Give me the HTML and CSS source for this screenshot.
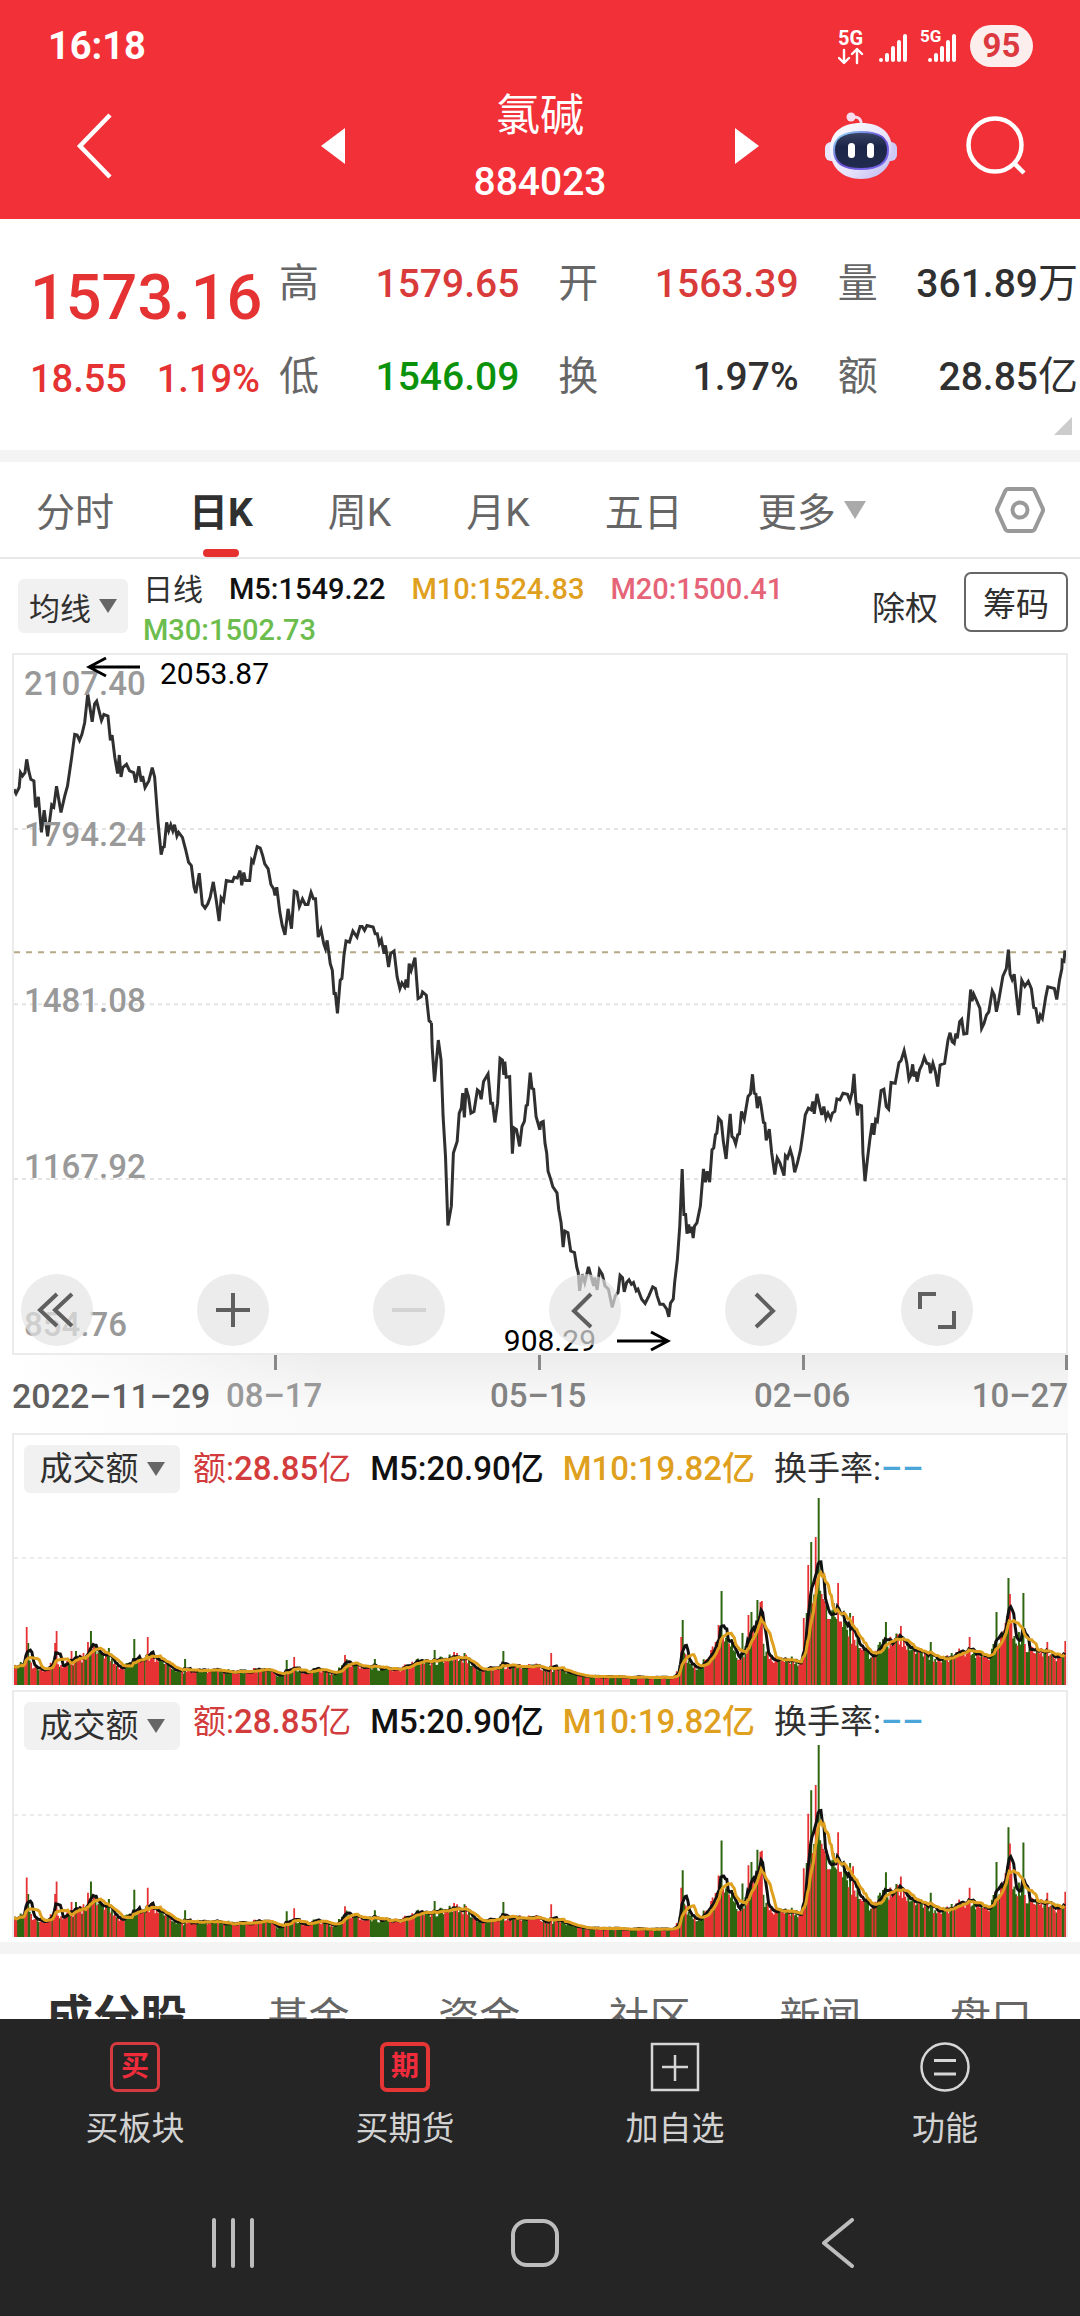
FILE: index.html
```
<!DOCTYPE html>
<html lang="zh-CN">
  <head>
    <meta charset="utf-8">
    <meta name="viewport" content="width=device-width, initial-scale=1">
    <title>氯碱 884023</title>
    <link rel="stylesheet" href="styles.css">
  </head>
  <body>
    <header>
      <div class="status">
        <span class="time">16:18</span>
        <div class="status-icons">
          <svg width="120" height="42" viewBox="0 0 120 42" aria-hidden="true">
            <g fill="#fff" font-family="Roboto, sans-serif" font-weight="700">
              <text x="0" y="20" font-size="20">5G</text>
              <text x="82" y="17" font-size="17">5G</text>
            </g>
            <g fill="none" stroke="#fff" stroke-width="2.4" stroke-linecap="round" stroke-linejoin="round">
              <path d="M6 25v12M1 33l5 5 5-5M19 38V25M14 29l5-5 5 5"/>
            </g>
            <g fill="none" stroke="#fff" stroke-width="4" stroke-linecap="round">
              <path d="M43 35v0M49 30v5M55 23v12M61 17v18M67 11v24M92 35v0M98 30v5M104 23v12M110 17v18M116 11v24"/>
            </g>
          </svg>
          <span class="battery">95</span>
        </div>
      </div>
      <nav class="title-bar">
        <a href="#" class="back" aria-label="返回">
          <svg width="40" height="70" viewBox="0 0 40 70"><path d="M38 4L8 35l30 31" fill="none" stroke="#fff" stroke-width="4.5"/></svg>
        </a>
        <a href="#" aria-label="上一个">
          <svg width="24" height="36" viewBox="0 0 24 36"><path d="M24 0v36L0 18z" fill="#fff"/></svg>
        </a>
        <div class="title">
          <h1>氯碱</h1>
          <span>884023</span>
        </div>
        <a href="#" aria-label="下一个">
          <svg width="24" height="36" viewBox="0 0 24 36"><path d="M0 0v36l24-18z" fill="#fff"/></svg>
        </a>
        <a href="#" class="robot" aria-label="智能助手">
          <svg width="72" height="68" viewBox="0 0 72 68">
            <defs>
              <linearGradient id="shell" x1="0" y1="0" x2="1" y2="1">
                <stop offset="0" stop-color="#fff"/>
                <stop offset=".6" stop-color="#e6e2fb"/>
                <stop offset="1" stop-color="#b9b4ee"/>
              </linearGradient>
              <linearGradient id="rim" x1="0" y1="0" x2="1" y2="1">
                <stop offset="0" stop-color="#8fe3f5"/>
                <stop offset=".5" stop-color="#6a4fd6"/>
                <stop offset="1" stop-color="#7a6cf0"/>
              </linearGradient>
              <linearGradient id="face" x1="0" y1="0" x2="0" y2="1">
                <stop offset="0" stop-color="#3a4566"/>
                <stop offset=".4" stop-color="#1b2547"/>
                <stop offset="1" stop-color="#222c50"/>
              </linearGradient>
            </defs>
            <path d="M27 5q10-1 9 8" fill="none" stroke="#f3dcf0" stroke-width="3"/>
            <circle cx="26" cy="5" r="4.5" fill="#f6dcee"/>
            <rect x="0" y="30" width="14" height="19" rx="6" fill="#e9e6fb"/>
            <rect x="58" y="30" width="14" height="19" rx="6" fill="#cfcaf5"/>
            <path d="M36 11c20 0 31 10 31 26 0 18-12 30-31 30S5 55 5 37c0-16 11-26 31-26z" fill="url(#shell)"/>
            <path d="M36 20c19 0 27 6 27 18s-8 19-27 19S9 50 9 38s8-18 27-18z" fill="url(#face)" stroke="url(#rim)" stroke-width="2"/>
            <rect x="23" y="31" width="7" height="15" rx="3.5" fill="#fff"/>
            <rect x="42" y="31" width="7" height="15" rx="3.5" fill="#fff"/>
          </svg>
        </a>
        <a href="#" class="search" aria-label="搜索">
          <svg width="62" height="62" viewBox="0 0 62 62"><g fill="none" stroke="#fff" stroke-width="4.5"><circle cx="29" cy="30" r="26.5"/><path d="M48 48l10 10"/></g></svg>
        </a>
      </nav>
    </header>

    <main>
      <section class="quote">
        <div class="price">
          <strong>1573.16</strong>
          <div class="change"><span>18.55</span><span>1.19%</span></div>
        </div>
        <dl>
          <div><dt>高</dt><dd class="up">1579.65</dd></div>
          <div><dt>开</dt><dd class="up">1563.39</dd></div>
          <div><dt>量</dt><dd>361.89<i>万</i></dd></div>
          <div><dt>低</dt><dd class="down">1546.09</dd></div>
          <div><dt>换</dt><dd>1.97%</dd></div>
          <div><dt>额</dt><dd>28.85<i>亿</i></dd></div>
        </dl>
        <span class="corner"></span>
      </section>

      <nav class="periods">
        <a href="#">分时</a>
        <a href="#" class="active">日K</a>
        <a href="#">周K</a>
        <a href="#">月K</a>
        <a href="#">五日</a>
        <a href="#" class="more">更多<span class="caret"></span></a>
        <button type="button" class="settings" aria-label="设置">
          <svg width="50" height="48" viewBox="0 0 50 48"><g fill="none" stroke="#999" stroke-width="4"><path d="M13 3h24q1.500 0 2.500 1.500L47.500 22q1 2 0 4L39.500 43.500Q38.500 45 37 45H13q-1.500 0-2.500-1.500L2.500 26q-1-2 0-4L10.500 4.500Q11.500 3 13 3z"/><circle cx="25" cy="24" r="7.500"/></g></svg>
        </button>
      </nav>

      <section class="averages">
        <button type="button" class="pick">均线<span class="caret"></span></button>
        <p>
          <span>日线</span>
          <span class="m5">M5:1549.22</span>
          <span class="m10">M10:1524.83</span>
          <span class="m20">M20:1500.41</span>
          <span class="m30">M30:1502.73</span>
        </p>
        <a href="#" class="rights">除权</a>
        <button type="button" class="chips">筹码</button>
      </section>

      <section class="kline">
        <svg class="line" viewBox="35 11 3067 2101" preserveAspectRatio="none" aria-hidden="true">
          <g fill="none" stroke="#e3e3e3" stroke-width="2" stroke-dasharray="4 4">
            <path d="M35 535H3102M35 1062H3102M35 1588H3102"/>
          </g>
          <path d="M35 906H3102" fill="none" stroke="#b5a985" stroke-width="2" stroke-dasharray="6 6"/>
          <g fill="none" stroke="#303030" stroke-width="3">
            <path d="M35 415L41 428 50 410 54 365 60 375 67 365 72 325 78 360 84 385 93 390 98 470 106 438 115 545 123 478 133 557 145 462 151 468 159 406 172 485 183 435 191 405 203 320 212 250 219 252 226 268 233 250 241 215 250 128 263 212 270 158 276 150 290 208 297 190 309 195 316 268 321 252 329 320 337 368 342 312 347 378 352 350 363 340 372 360 384 365 390 395 399 346 406 392 410 375 417 410 428 390 438 350 445 378 455 515 464 612 469 590 473 588 480 515 486 540 492 522 498 540 503 522 510 556 515 545 526 560 535 595 544 635 552 645 560 710 565 728 575 668 584 762 592 773 600 760 607 740 616 694 624 745 633 812 639 742 646 752 654 690 665 692 672 693 677 680 686 682 694 660 699 704 705 666 710 690 722 690 728 628 733 635 744 588 753 592 760 615 766 640 776 655 784 702 792 715 796 735 801 710 810 785 817 825 825 853 834 775 844 835 852 722 860 725 867 768 876 745 884 762 892 762 901 726 908 745 914 745 922 860 930 838 938 880 943 895 948 870 957 940 963 960 968 1030 972 1030 978 1090 986 990 991 985 997 915 1003 872 1013 875 1023 842 1035 860 1044 828 1050 828 1057 840 1064 825 1082 830 1088 850 1094 850 1100 880 1106 868 1114 910 1118 885 1127 950 1133 910 1143 902 1152 980 1160 1015 1166 998 1174 1010 1178 988 1183 1012 1187 940 1193 960 1204 922 1213 1045 1222 1040 1226 1025 1237 1035 1245 1112 1252 1118"/>
            <path transform="translate(0 900)" d="M1252 218L1254 290 1261 395 1272 270 1280 330 1286 500 1293 620 1300 828 1310 770 1316 610 1327 575 1333 490 1339 475 1343 430 1348 503 1353 415 1360 440 1367 490 1376 485 1386 420 1392 425 1397 448 1404 395 1417 372 1425 460 1430 460 1437 518 1445 460 1452 325 1459 330 1463 375 1466 335 1470 382 1480 380 1488 612 1493 535 1500 540 1509 590 1516 530 1523 515 1528 468 1532 465 1540 368 1545 415 1550 418 1557 500 1568 540"/>
            <path transform="translate(1568 750)" d="M0 690L3 668 10 665 15 730 20 760 24 815 32 840 38 862 50 880 55 930 62 970 68 1043 73 995 82 1000 90 1055 101 1060 108 1105 112 1120 116 1175 124 1125 131 1150 142 1103 149 1130 157 1160 160 1135 167 1172 174 1112 182 1125 190 1160 200 1170 211 1225 220 1190 228 1180 234 1128 241 1135 246 1178 253 1150 260 1142 267 1155 273 1150 281 1175 286 1170 297 1200 307 1213 318 1190 329 1163 337 1168 342 1190 350 1215 360 1215 370 1230 376 1253 381 1212 389 1200 393 1150 401 1080 408 980 415 808 420 945 425 945 429 1003 434 975 438 1000 443 982 447 1016 451 980 458 970 468 920 477 808 483 848 488 815 495 848 502 750 507 745 512 705 516 700 521 655 529 665 535 725 543 778 548 720 555 642 560 710 565 715 571 733 577 705 582 702 588 635 596 658 607 590 614 582 620 523 625 580 630 583 634 625 640 590 645 618 652 668 656 670 660 722 669 688 676 760 685 825 692 775 700 790 712 828 716 768 722 775 730 750 737 775 743 818 751 790 760 750 767 700 774 645 783 625 791 630 796 605 800 642 808 582 815 615 822 645 828 620 834 655 840 640 848 657 853 640 860 635 866 597 875 600 884 580 897 583 904 603 911 575 916 522 921 600 926 647 930 615 938 618 942 760 948 845 955 780 962 720 969 670 974 705 979 660 984 665 995 572 1003 568 1010 620 1017 628 1024 548 1036 550 1047 488 1053 482 1062 452 1070 490 1076 538 1082 525 1087 493 1091 530 1096 515 1100 545 1107 510 1114 495 1121 472 1128 490 1135 492 1139 520 1146 490 1153 515 1160 560 1167 495 1180 490 1190 420 1196 398 1202 425 1208 430 1213 400 1217 415 1224 365 1230 358 1236 402 1245 400 1252 320 1256 268 1260 303 1265 282 1272 298 1283 325 1288 385 1295 370 1302 345 1309 335 1319 272 1325 285 1331 335 1338 300 1350 228 1360 205 1366 148 1371 222 1377 238 1383 222 1390 290 1396 345 1405 240 1414 258 1424 243 1433 265 1440 322 1446 325 1453 370 1459 345 1465 355 1475 290 1481 260 1500 265 1507 298 1515 240 1522 205 1523 180 1528 183 1531 150"/>
          </g>
        </svg>
        <span class="scale s1">2107.40</span>
        <span class="scale s2">1794.24</span>
        <span class="scale s3">1481.08</span>
        <span class="scale s4">1167.92</span>
        <span class="scale s5">854.76</span>
        <span class="mark high"><svg width="54" height="22" viewBox="0 0 54 22"><path d="M54 11H3M20 2L3 11l17 9" fill="none" stroke="#000" stroke-width="3"/></svg>2053.87</span>
        <span class="mark low">908.29<svg width="54" height="22" viewBox="0 0 54 22"><path d="M0 11h51M34 2l17 9-17 9" fill="none" stroke="#000" stroke-width="3"/></svg></span>
        <div class="tools">
          <button type="button" aria-label="最早"><svg viewBox="0 0 72 72"><path d="M36 20L19 36l17 16M51 20L34 36l17 16"/></svg></button>
          <button type="button" aria-label="放大"><svg viewBox="0 0 72 72"><path d="M36 19v34M19 36h34"/></svg></button>
          <button type="button" aria-label="缩小" disabled><svg viewBox="0 0 72 72"><path d="M19 36h34"/></svg></button>
          <button type="button" aria-label="左移"><svg viewBox="0 0 72 72"><path d="M42 20L25 37l17 16"/></svg></button>
          <button type="button" aria-label="右移"><svg viewBox="0 0 72 72"><path d="M31 20l17 17-17 16"/></svg></button>
          <button type="button" aria-label="全屏"><svg viewBox="0 0 72 72"><path d="M19 35V20h16M53 37v16H37"/></svg></button>
        </div>
      </section>

      <div class="dates">
        <span class="first">2022–11–29</span>
        <span class="faded">08–17</span>
        <span>05–15</span>
        <span>02–06</span>
        <span class="last">10–27</span>
      </div>

      <section class="volume">
        <div class="legend">
          <button type="button" class="pick">成交额<span class="caret"></span></button>
          <span class="amount">额:<b>28.85</b>亿</span>
          <span class="m5">M5:20.90亿</span>
          <span class="m10">M10:19.82亿</span>
          <span>换手率:<em>––</em></span>
        </div>
        <svg class="bars" viewBox="0 0 1056 187" preserveAspectRatio="none" aria-hidden="true"></svg>
      </section>

      <section class="volume second">
        <div class="legend">
          <button type="button" class="pick">成交额<span class="caret"></span></button>
          <span class="amount">额:<b>28.85</b>亿</span>
          <span class="m5">M5:20.90亿</span>
          <span class="m10">M10:19.82亿</span>
          <span>换手率:<em>––</em></span>
        </div>
        <svg class="bars" viewBox="0 0 1056 187" preserveAspectRatio="none" aria-hidden="true"></svg>
      </section>

      <nav class="sections">
        <a href="#" class="active">成分股</a>
        <a href="#">基金</a>
        <a href="#">资金</a>
        <a href="#">社区</a>
        <a href="#">新闻</a>
        <a href="#">盘口</a>
      </nav>
    </main>

    <footer>
      <nav class="actions">
        <a href="#"><span class="stamp">买</span>买板块</a>
        <a href="#"><span class="stamp bold">期</span>买期货</a>
        <a href="#">
          <svg width="50" height="50" viewBox="0 0 50 50"><path d="M2 2h46v46H2zM25 13v26M12 25h26" fill="none" stroke="#d6d6d6" stroke-width="2.500"/></svg>加自选
        </a>
        <a href="#">
          <svg width="50" height="50" viewBox="0 0 50 50"><g fill="none" stroke="#d6d6d6" stroke-width="2.500"><circle cx="25" cy="25" r="23.500"/><path d="M14 18.500h22M14 32h22" stroke-width="3"/></g></svg>功能
        </a>
      </nav>
      <div class="system">
        <button type="button" aria-label="最近任务"><svg width="50" height="50" viewBox="0 0 50 50"><path d="M6 2v46M25 2v46M44 2v46"/></svg></button>
        <button type="button" aria-label="主屏幕"><svg width="50" height="50" viewBox="0 0 50 50"><rect x="3" y="3" width="44" height="44" rx="14"/></svg></button>
        <button type="button" aria-label="返回"><svg width="50" height="50" viewBox="0 0 50 50"><path d="M40 2L12 25l28 23"/></svg></button>
      </div>
    </footer>
    <script src="chart.js"></script>
  </body>
</html>
```
FILE: styles.css
```
* {
    box-sizing: border-box;
}

body, html {
    height: 100%;
    margin: 0;
}

body {
    display: flex;
    flex-direction: column;
    background: #fff;
    color: #303030;
    font-family: Roboto, 'Noto Sans CJK SC', sans-serif;
    font-size: 32px;
}

a {
    color: inherit;
    text-decoration: none;
}

button {
    border: 0;
    padding: 0;
    background: none;
    color: inherit;
    font: inherit;
}

svg {
    display: block;
}

h1, p, dl, dd {
    margin: 0;
}

header {
    flex: none;
    background: #f13038;
    color: #fff;
}

.status {
    display: flex;
    justify-content: space-between;
    align-items: center;
    height: 92px;
    padding: 0 47px 0 48px;
}

.time {
    font-size: 38px;
    font-weight: 700;
}

.status-icons {
    display: flex;
    align-items: center;
    gap: 12px;
}

.battery {
    width: 63px;
    border-radius: 21px;
    background: #fdeeee;
    color: #dc3a40;
    font-size: 33px;
    font-weight: 700;
    line-height: 42px;
    text-align: center;
}

.title-bar {
    display: grid;
    grid-template-columns: 321px 24px 1fr 24px 66px 72px 183px;
    grid-template-rows: 108px;
    align-items: center;
    height: 127px;
}

.back {
    padding-left: 72px;
}

.title {
    padding-top: 6px;
    font-size: 39px;
    font-weight: 500;
    line-height: 66px;
    text-align: center;
}

.title h1 {
    font-size: 44px;
    font-weight: 400;
    line-height: 66px;
}

.title span {
    display: block;
}

.robot {
    grid-column: 6;
}

.search {
    padding-left: 69px;
}

.quote {
    position: relative;
    display: grid;
    grid-template-columns: 249px 1fr;
    height: 231px;
    padding: 18px 2px 0 30px;
}

.price {
    color: #e53232;
    font-weight: 500;
}

.price strong {
    display: block;
    font-size: 63px;
    font-weight: 500;
    line-height: 122px;
}

.change {
    display: flex;
    justify-content: space-between;
    padding-right: 19px;
    font-size: 38px;
    line-height: 40px;
}

.quote dl {
    display: grid;
    grid-template-columns: repeat(3, 1fr);
    grid-auto-rows: 93px;
    column-gap: 39px;
}

.quote dl div {
    display: flex;
    justify-content: space-between;
    align-items: baseline;
    line-height: 93px;
    white-space: nowrap;
}

.quote dt {
    color: #666;
    font-size: 40px;
}

.quote dd {
    font-size: 39px;
    font-weight: 500;
}

.quote dd i {
    font-size: 40px;
    font-style: normal;
    font-weight: 400;
    line-height: 40px;
}

.quote .up {
    color: #d93a3a;
}

.quote .down {
    color: #0a930a;
}

.corner {
    position: absolute;
    right: 8px;
    bottom: 15px;
    border-bottom: 18px solid #ccc;
    border-left: 18px solid transparent;
}

.periods {
    display: flex;
    align-items: center;
    gap: 75px;
    height: 109px;
    padding: 0 35px 0 36px;
    border-top: 12px solid #f4f4f4;
    border-bottom: 2px solid #e8e8e8;
    color: #666;
    font-size: 39px;
}

.periods a {
    padding-top: 8px;
    line-height: 87px;
}

.periods .active {
    position: relative;
    color: #303030;
    font-weight: 700;
}

.periods .active::after {
    content: "";
    position: absolute;
    left: 50%;
    bottom: 0;
    width: 36px;
    height: 8px;
    margin-left: -18px;
    border-radius: 4px;
    background: #e63030;
}

.caret {
    display: inline-block;
    border: 9px solid transparent;
    border-top: 14px solid #666;
    border-bottom: 0;
}

.more {
    display: flex;
    align-items: center;
    gap: 8px;
}

.more .caret {
    margin-bottom: 8px;
    border-width: 18px 11px 0;
    border-top-color: #aaa;
}

.settings {
    margin-left: auto;
}

.averages {
    display: flex;
    align-items: center;
    height: 94px;
    padding: 0 12px 0 18px;
}

.pick {
    display: flex;
    align-items: center;
    justify-content: center;
    gap: 8px;
    width: 110px;
    height: 54px;
    border-radius: 6px;
    background: #f1f1f1;
    font-size: 31px;
}

.averages p {
    display: flex;
    flex: 1;
    flex-wrap: wrap;
    column-gap: 26px;
    padding: 8px 0 0 15px;
    font-size: 29px;
    font-weight: 500;
    line-height: 41px;
}

.averages p span:first-child {
    font-size: 30px;
    font-weight: 400;
}

.m5 {
    color: #111;
}

.m10 {
    color: #dfa020;
}

.m20 {
    color: #e56478;
}

.m30 {
    color: #6dbd4e;
}

.rights {
    padding-right: 26px;
    font-size: 33px;
}

.chips {
    width: 104px;
    height: 60px;
    margin-bottom: 8px;
    border: 2px solid #666;
    border-radius: 7px;
    font-size: 33px;
}

.kline {
    position: relative;
    margin: 0 12px;
    border: 2px solid #ebebeb;
}

.line {
    width: 100%;
    height: 698px;
}

.line path {
    vector-effect: non-scaling-stroke;
}

.scale {
    position: absolute;
    left: 10px;
    color: #999;
    font-size: 33px;
    font-weight: 500;
    line-height: 40px;
}

.s1 { top: 9px; }
.s2 { top: 160px; }
.s3 { top: 326px; }
.s4 { top: 492px; }
.s5 { top: 650px; }

.mark {
    position: absolute;
    display: flex;
    color: #000;
    font-size: 30px;
    line-height: 36px;
}

.high {
    top: 1px;
    left: 72px;
    gap: 20px;
}

.low {
    right: 395px;
    bottom: -6px;
    align-items: center;
    gap: 21px;
}

.tools {
    position: absolute;
    right: -2px;
    bottom: 7px;
    left: -2px;
    display: grid;
    grid-template-columns: repeat(6, 1fr);
}

.tools button {
    width: 72px;
    height: 72px;
    margin-left: 9px;
    border-radius: 50%;
    background: rgba(228, 228, 228, 0.7);
}

.tools path {
    fill: none;
    stroke: #5f5f5f;
    stroke-width: 4;
}

.tools button:disabled path {
    stroke: #d3d3d3;
}

.dates {
    display: grid;
    grid-template-columns: 214px repeat(3, 1fr) 50px;
    height: 78px;
    margin: 0 12px;
    background: linear-gradient(90deg, #fff, rgba(255, 255, 255, 0) 30%), linear-gradient(#ededed, #fafafa 70%);
    color: #828282;
    font-size: 33px;
    font-weight: 500;
    line-height: 82px;
    white-space: nowrap;
}

.dates span {
    position: relative;
}

.dates .first {
    color: #606060;
    font-size: 34px;
}

.dates .faded {
    color: #999;
}

/* tick marks hang from the chart frame */
.dates span:not(.first)::before {
    content: "";
    position: absolute;
    top: 0;
    left: 48px;
    width: 3px;
    height: 15px;
    background: #888;
}

.dates .last {
    justify-self: end;
}

.dates span.last::before {
    right: 0;
    left: auto;
}

.volume {
    margin: 0 12px;
    padding-top: 10px;
    border: 2px solid #ebebeb;
    border-bottom: 0;
    background: repeating-linear-gradient(90deg, #ececec 0 4px, #fff 4px 8px) 0 122px / 100% 2px no-repeat;
}

.second {
    margin-top: 5px;
    margin-bottom: 5px;
}

.legend {
    display: flex;
    gap: 19px;
    padding-left: 10px;
    font-size: 33px;
    line-height: 48px;
    white-space: nowrap;
}

.legend .pick {
    width: 156px;
    height: 48px;
    margin-right: -6px;
    font-size: 33px;
}

.second .legend {
    line-height: 40px;
}

.legend b, .legend .m5, .legend .m10 {
    font-weight: 500;
}

.legend em {
    color: #4aa5d8;
    font-style: normal;
    font-weight: 500;
}

.amount {
    color: #d23c3c;
}

.bars {
    width: 100%;
    height: 187px;
    margin-top: 5px;
}

.second .bars {
    height: 192px;
    margin-top: -5px;
}

.bars path {
    fill: none;
}

.sections {
    display: flex;
    justify-content: space-between;
    align-items: center;
    padding: 30px 48px 28px 46px;
    border-top: 12px solid #f4f4f4;
    color: #666;
    font-size: 41px;
    line-height: 68px;
}

.sections .active {
    margin-right: -8px;
    color: #303030;
    font-size: 47px;
    font-weight: 700;
}

main {
    flex: 1;
    min-height: 0;
    overflow: hidden;
}

footer {
    flex: none;
    height: 297px;
    background: #252525;
    color: #d2d2d2;
}

.actions {
    display: grid;
    grid-template-columns: repeat(4, 1fr);
    padding-top: 23px;
}

.actions a {
    display: flex;
    flex-direction: column;
    align-items: center;
    gap: 12px;
    font-size: 33px;
    line-height: 50px;
}

.stamp {
    width: 50px;
    height: 50px;
    border: 3px solid #d43a40;
    border-radius: 7px;
    color: #f02c3c;
    font-size: 28px;
    font-weight: 700;
    line-height: 43px;
    text-align: center;
}

.stamp.bold {
    border-width: 4px;
    border-color: #e63535;
    line-height: 41px;
}

.system {
    display: flex;
    justify-content: space-between;
    padding: 64px 218px 0 208px;
}

.system svg {
    fill: none;
    stroke: #bdbdbd;
    stroke-width: 4;
    stroke-linecap: round;
    stroke-linejoin: round;
}
```
FILE: chart.js
```
(function () {
    'use strict';

    var DAYS = 704,
        STEP = 1.5,
        HEIGHT = 187,
        // [x, height] of the usual turnover level along the chart
        level = [
            [0, 18], [12, 26], [19, 19], [29, 15], [40, 24], [50, 21], [60, 26], [71, 30], [78, 36], [86, 36], [95, 26], [105, 18],
            [115, 21], [126, 28], [139, 31], [150, 23], [160, 16], [170, 13], [181, 16], [229, 14], [250, 18], [263, 10],
            [274, 14], [284, 16], [291, 13], [301, 17], [312, 14], [322, 12], [332, 25], [346, 19], [387, 16], [401, 26],
            [415, 23], [439, 30], [453, 28], [467, 16], [487, 20], [498, 20], [525, 20], [528, 16], [539, 16], [546, 18], [560, 11],
            [573, 9], [622, 8], [660, 8], [666, 14], [672, 32], [678, 23], [684, 18], [697, 29], [708, 50], [715, 50], [721, 42],
            [728, 27], [735, 42], [749, 72], [753, 37], [758, 27], [766, 25], [780, 27], [789, 21], [794, 42], [797, 85], [808, 100], [814, 78],
            [828, 78], [838, 53], [849, 43], [859, 32], [883, 51], [897, 41], [918, 30], [932, 26], [952, 36], [962, 36],
            [976, 26], [983, 41], [997, 66], [1007, 50], [1021, 37], [1035, 33], [1042, 30], [1056, 28]
        ],
        // [x, height, closed higher]
        spikes = [
            [12, 58, 1], [14, 42, 0], [40, 42, 1], [42, 54, 1], [57, 34, 1], [62, 34, 0], [74, 43, 1], [77, 54, 0], [95, 37, 0],
            [120, 46, 0], [134, 48, 1], [171, 26, 0], [273, 25, 0], [281, 28, 1], [332, 30, 1], [362, 26, 0], [421, 35, 0],
            [441, 33, 1], [452, 32, 0], [490, 34, 0], [539, 32, 1], [669, 48, 1], [671, 65, 0], [707, 60, 1], [710, 94, 0],
            [731, 52, 0], [737, 70, 1], [739, 73, 0], [746, 85, 0], [748, 83, 1], [750, 84, 1], [792, 67, 1], [795, 72, 0],
            [797, 120, 1], [800, 143, 0], [804, 148, 1], [807, 187, 0], [812, 86, 1], [827, 102, 1], [839, 72, 0], [841, 69, 1],
            [874, 63, 0], [890, 59, 1], [920, 43, 0], [959, 48, 1], [985, 73, 0], [995, 62, 1], [997, 107, 0], [999, 91, 1],
            [1013, 92, 0], [1037, 43, 1], [1054, 44, 1]
        ],
        seed = 7;

    function random () {
        seed = (seed * 16807) % 2147483647;
        return seed / 2147483647;
    }

    function levelAt (x) {
        var i = 1;
        while (i < level.length - 1 && level[i][0] < x) {
            i = i + 1;
        }
        var a = level[i - 1], b = level[i];
        return a[1] + (b[1] - a[1]) * (x - a[0]) / (b[0] - a[0]);
    }

    function buildDays () {
        var days = [], up = true, i;
        for (i = 0; i < DAYS; i++) {
            up = random() < 0.35 ? up : random() < (i > 460 ? 0.62 : 0.52);
            days.push({ value: levelAt(i * STEP) * (0.78 + random() * 0.32), up: up });
        }
        spikes.forEach(function (spike) {
            days[Math.round(spike[0] / STEP)] = { value: spike[1], up: !!spike[2] };
        });
        return days;
    }

    function bars (days, up) {
        return days.map(function (day, i) {
            return day.up === up ? 'M' + (i * STEP + 0.75) + ' ' + HEIGHT + 'V' + (HEIGHT - day.value).toFixed(1) : '';
        }).join('');
    }

    function average (days, n) {
        return 'M' + days.map(function (day, i) {
            var part = days.slice(Math.max(0, i - n + 1), i + 1),
                sum = part.reduce(function (total, d) { return total + d.value; }, 0);
            return (i * STEP) + ' ' + (HEIGHT - sum / part.length).toFixed(1);
        }).join('L');
    }

    function draw (svg, days) {
        [
            [bars(days, false), '#2f6610', 2],
            [bars(days, true), '#e63232', 1.8],
            [average(days, 5), '#111', 3],
            [average(days, 10), '#dfa020', 3]
        ].forEach(function (item) {
            var path = document.createElementNS('http://www.w3.org/2000/svg', 'path');
            path.setAttribute('d', item[0]);
            path.setAttribute('stroke', item[1]);
            path.setAttribute('stroke-width', item[2]);
            svg.appendChild(path);
        });
    }

    var days = buildDays();
    Array.prototype.forEach.call(document.querySelectorAll('.bars'), function (svg) { draw(svg, days); });
}());
```
